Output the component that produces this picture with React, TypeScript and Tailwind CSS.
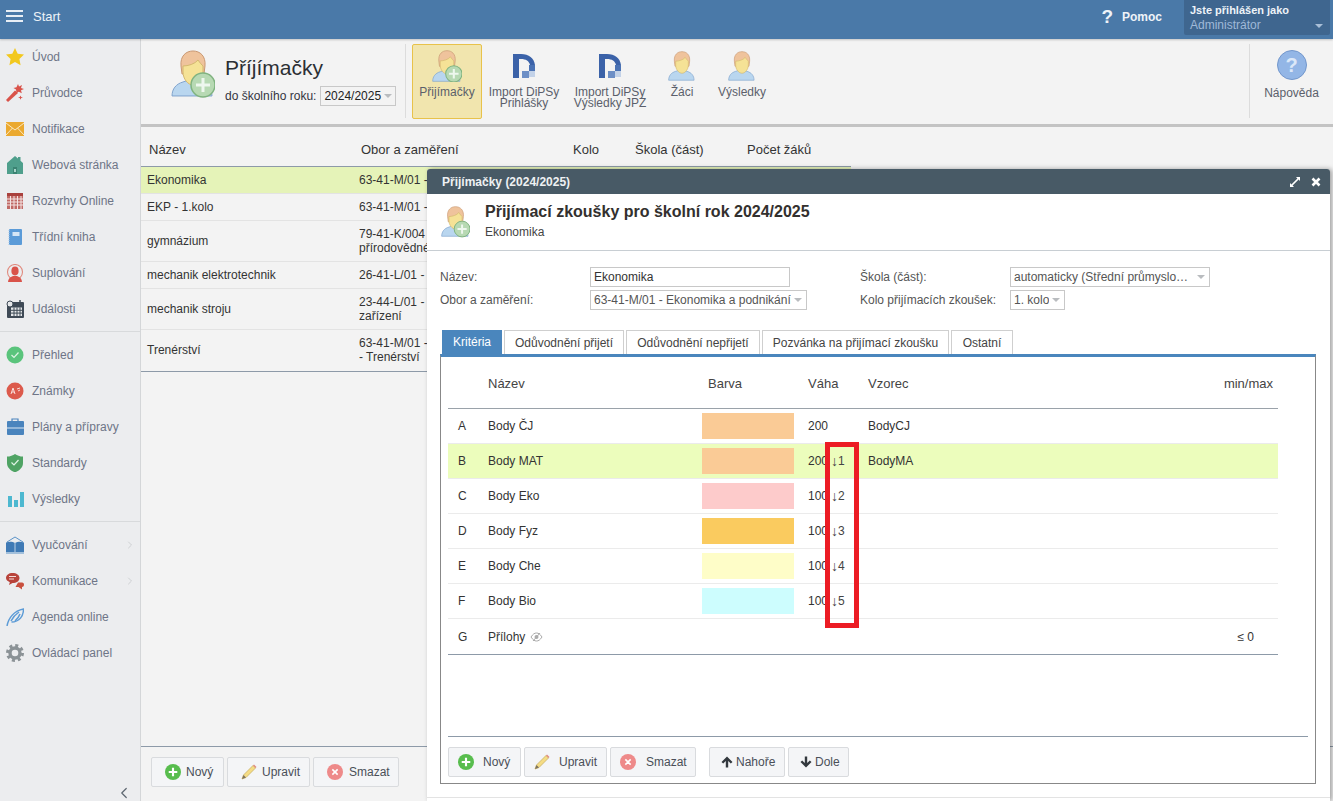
import { ChevronLeft, ChevronRight } from "lucide-react";
import type { ReactNode } from "react";

function Person({ size = 32, plus = false }: { size?: number; plus?: boolean }) {
  return (
    <svg width={size} height={size * 1.09} viewBox="0 0 44 48" className="shrink-0">
      <path d="M1 46c0-7 4-12 11-14l6-2h6l6 2c7 2 11 7 11 14z" fill="#b9d6ef" stroke="#7fa3cc" strokeWidth="1" />
      <path d="M10 16C9 6 15 1 22 1s13 5 12 15l-1 8H11z" fill="#efc39c" stroke="#c99871" strokeWidth="1" />
      <path d="M12 16c5 0 12-2 15-6 2 3 4 5 5 6v6c0 7-5 13-10 13S12 29 12 22z" fill="#f5e296" stroke="#d3b86e" strokeWidth="1" />
      {plus && (
        <g>
          <circle cx="32" cy="35" r="12" fill="#b7d9b3" stroke="#80b380" strokeWidth="1.5" />
          <path d="M32 28v14M25 35h14" stroke="#eef7ee" strokeWidth="3" />
        </g>
      )}
    </svg>
  );
}

function Dipsy() {
  return (
    <svg width="22" height="26" viewBox="0 0 22 26" className="shrink-0">
      <path d="M0 1h8c8 0 13 4 14 11h-5c-1-4-4-6-9-6H6v19H0z" fill="#3b62a8" />
      <rect x="16" y="12" width="6" height="6" fill="#4a72b4" />
      <rect x="9" y="18" width="7" height="7" fill="#6d8fc6" />
      <rect x="16" y="18" width="6" height="6" fill="#c3d2e8" />
    </svg>
  );
}

const sideIcons: Record<string, ReactNode> = {
  star: <path d="M9 0l2.700 5.800 6.300.8-4.600 4.300 1.200 6.300L9 14l-5.600 3.200 1.200-6.300L0 6.600l6.300-.8z" fill="#f2c81e" />,
  wand: (
    <g fill="#d9534a">
      <path d="M0 16L9 6.500l3 2.500L2 18z" />
      <path d="M12 0l1 2.500L16 1l-1 3 3 1-3 1.200 .8 3-3-1.500L10.500 9 10 5.500 7.500 4l3-.8z" />
      <path d="M14.500 11.500l.7 1.600 1.800.4-1.800.6-.7 1.700-.7-1.700-1.800-.6 1.800-.4z" />
    </g>
  ),
  mail: (
    <g>
      <rect x="0" y="2" width="18" height="14" fill="#eba92f" />
      <path d="M0 3l9 7 9-7M0 15l6.500-7M18 15l-6.500-7" stroke="#fbeed2" strokeWidth="0.9" fill="none" />
    </g>
  ),
  house: (
    <g>
      <path d="M9 0l3 2.600V1h2.500v3.800L17 7v11H1V7z" fill="#4f9f8c" />
      <rect x="7" y="11" width="4" height="7" fill="#3b8372" />
      <rect x="8" y="13" width="2" height="3" fill="#a8d3c8" />
    </g>
  ),
  grid: (
    <g>
      <rect x="1" y="1" width="16" height="16" fill="#c06a66" />
      <rect x="1" y="1" width="16" height="3" fill="#a9413d" />
      <path d="M1 7h16M1 10h16M1 13h16M4.500 4v13M8 4v13M11.500 4v13M15 4v13" stroke="#f4e4e3" strokeWidth="1" />
    </g>
  ),
  note: (
    <g>
      <rect x="3" y="1" width="13" height="16" rx="1" fill="#5b9bd8" />
      <path d="M3 2v15" stroke="#a8c9ea" strokeWidth="1" strokeDasharray="1 1" />
      <rect x="6.500" y="4" width="7" height="4" fill="#d5e6f6" />
    </g>
  ),
  sub: (
    <g>
      <circle cx="9" cy="8" r="7.500" fill="none" stroke="#e08a7e" strokeWidth="1.100" />
      <ellipse cx="9" cy="7" rx="3.600" ry="4.400" fill="#d9534a" />
      <path d="M2 18c0-3 2-5 5-6h4c3 1 5 3 5 6z" fill="#d9534a" />
    </g>
  ),
  cal: (
    <g>
      <rect x="1" y="2" width="17" height="16" rx="1" fill="#3f4a56" />
      <rect x="5" y="7.500" width="11" height="8.500" fill="#e6e8ea" />
      <path d="M5 10.300h11M5 13.100h11M8 7.500v8.500M11 7.500v8.500M14 7.500v8.500" stroke="#3f4a56" strokeWidth="1" />
      <circle cx="4" cy="4" r="3" fill="#e6e8ea" stroke="#3f4a56" />
      <path d="M14 0v3" stroke="#3f4a56" strokeWidth="1.500" />
    </g>
  ),
  ok: <circle cx="9" cy="9" r="8.500" fill="#5ac47c" />,
  grade: (
    <g>
      <circle cx="9" cy="9" r="8.500" fill="#dc5a4c" />
      <path d="M5 12l2-6 2 6M6 10h2M11 7l3-1M12 9l2-1" stroke="#f9e0dc" strokeWidth="1" fill="none" />
    </g>
  ),
  case: (
    <g>
      <path d="M6 3V1h6v2" fill="none" stroke="#4a84bd" strokeWidth="1.200" />
      <rect x="1" y="3" width="17" height="14" rx="1" fill="#4a84bd" />
      <path d="M1 10h17" stroke="#dce8f3" strokeWidth="1" />
    </g>
  ),
  shield: <path d="M9 0c2 1.500 5 2.600 8 2.600V9c0 4.500-3.500 7.600-8 9.400C4.500 16.600 1 13.500 1 9V2.600C4 2.600 7 1.500 9 0z" fill="#4fa364" />,
  bars: (
    <g fill="#4db8d0">
      <rect x="2" y="6" width="4" height="11" />
      <rect x="8" y="10" width="4" height="7" />
      <rect x="14" y="2" width="4" height="15" />
    </g>
  ),
  book: (
    <g>
      <path d="M1 6l8-5 8 5" fill="none" stroke="#5b93c8" strokeWidth="1" />
      <path d="M0 6.500c3-1 6.500-1 9 .5 2.500-1.500 6-1.500 9-.5V16H0z" fill="#3f7ab5" />
      <path d="M9 7v9" stroke="#dce8f3" strokeWidth="0.800" />
      <path d="M0 17h18" stroke="#5b93c8" strokeWidth="1" />
    </g>
  ),
  chat: (
    <g>
      <path d="M6.500 1c4 0 7 2 7 5s-3 5-7 5l-3.500 2 .8-2.800C1.500 9.200 0 7.800 0 6c0-3 3-5 6.500-5z" fill="#b8433a" />
      <path d="M3 4.500h7M3 7h5" stroke="#f4dcd9" strokeWidth="1" />
      <path d="M12 10.500h4c1.500 0 2 1 2 2.200s-.5 2.300-2 2.300v2.500l-3.500-2.500H9.500z" fill="#c9503f" />
    </g>
  ),
  feather: (
    <g fill="none" stroke="#5c9bd6" strokeWidth="1.500">
      <path d="M1 18C2.500 10 8 3 17.500 1c0 7-4 13-12 13" />
      <path d="M5 13c2-4 5-7 8-9M9 13c2-2 4-4 5-7" />
    </g>
  ),
  gear: (
    <g fill="none" stroke="#8b9296">
      <circle cx="9" cy="9" r="5" strokeWidth="3.400" />
      <circle cx="9" cy="9" r="7.500" strokeWidth="3" strokeDasharray="3 2.890" />
    </g>
  ),
};

const groups = [
  [
    ["star", "Úvod"],
    ["wand", "Průvodce"],
    ["mail", "Notifikace"],
    ["house", "Webová stránka"],
    ["grid", "Rozvrhy Online"],
    ["note", "Třídní kniha"],
    ["sub", "Suplování"],
    ["cal", "Události"],
  ],
  [
    ["ok", "Přehled"],
    ["grade", "Známky"],
    ["case", "Plány a přípravy"],
    ["shield", "Standardy"],
    ["bars", "Výsledky"],
  ],
  [
    ["book", "Vyučování", "more"],
    ["chat", "Komunikace", "more"],
    ["feather", "Agenda online"],
    ["gear", "Ovládací panel"],
  ],
];

function Sidebar() {
  return (
    <aside className="relative w-[141px] shrink-0 border-r border-[#d4d6d8] bg-[#ecedef]">
      {groups.map((items, g) => (
        <div key={g} className={g < 2 ? "mb-[5px] border-b border-[#d8dadc] pb-[4px]" : ""}>
          {items.map(([icon, label, more]) => (
            <div key={label} className="relative flex h-9 items-center pl-[6px] text-[12px] text-[#6e7587]">
              <svg width="18" height="18" viewBox="0 0 18 18" className="shrink-0">
                {sideIcons[icon]}
                {icon === "ok" && <path d="M5.500 9l2.500 2.500 4.500-5" fill="none" stroke="#dff5e5" strokeWidth="1.200" />}
                {icon === "shield" && <path d="M5.500 8.500l2.500 2.500 4.500-5" fill="none" stroke="#dff5e5" strokeWidth="1.200" />}
              </svg>
              <span className="ml-[8px]">{label}</span>
              {more && <ChevronRight size={12} strokeWidth={1.5} className="absolute left-[124px] text-[#c4c7ca]" />}
            </div>
          ))}
        </div>
      ))}
      <ChevronLeft size={18} strokeWidth={1.6} className="absolute bottom-[-1px] left-[115px] text-[#5d6670]" />
    </aside>
  );
}

function BtnIcon({ kind }: { kind: string }) {
  if (kind === "new")
    return (
      <svg width="16" height="16" viewBox="0 0 15 15" className="shrink-0">
        <circle cx="7.500" cy="7.500" r="7.500" fill="#58bd4e" />
        <path d="M7.500 3.500v8M3.500 7.500h8" stroke="#fff" strokeWidth="2" />
      </svg>
    );
  if (kind === "edit")
    return (
      <svg width="16" height="16" viewBox="0 0 16 16" className="shrink-0">
        <path d="M1 15l1.500-4L12 1.500 14.500 4 5 13.500z" fill="#f5dc84" stroke="#c9b063" strokeWidth="0.8" />
        <path d="M12 1.500L14.500 4l1-1-2.500-2.500z" fill="#e08a80" />
        <path d="M1 15l1.500-4L5 13.500z" fill="#7d7462" />
      </svg>
    );
  if (kind === "del")
    return (
      <svg width="16" height="16" viewBox="0 0 15 15" className="shrink-0">
        <circle cx="7.500" cy="7.500" r="7.500" fill="#ee8a8a" />
        <path d="M5 5l5 5M10 5l-5 5" stroke="#fff" strokeWidth="1.500" />
      </svg>
    );
  return (
    <svg width="12" height="12" viewBox="0 0 12 12" className={`shrink-0 ${kind === "down" ? "rotate-180" : ""}`}>
      <path d="M6 0.500L0.500 6l1.700 1.500L4.800 5v6.500h2.400V5l2.600 2.500L11.500 6z" fill="#33383e" />
    </svg>
  );
}

function Btn({ kind, label, w, pad }: { kind: string; label: string; w: string; pad: string }) {
  return (
    <div className={`flex h-[30px] items-center rounded-[2px] border border-[#d9dbde] bg-[#f4f5f7] text-[12px] text-[#4a4f57] ${w} ${pad}`}>
      <BtnIcon kind={kind} />
      <span>{label}</span>
    </div>
  );
}

function Caret({ color = "border-t-[#b9bcbf]" }: { color?: string }) {
  return <span className={`ml-auto h-0 w-0 shrink-0 border-x-[4px] border-t-[4px] border-x-transparent ${color}`} />;
}

function Select({ value, w }: { value: string; w: string }) {
  return (
    <div className={`flex h-5 items-center border border-[#c8c8c8] bg-white pr-[4px] pl-[3px] text-[12px] text-[#555] ${w}`}>
      <span className="truncate">{value}</span>
      <Caret />
    </div>
  );
}

function Tool({ icon, label, w, active }: { icon: ReactNode; label: ReactNode; w: string; active?: boolean }) {
  return (
    <div className={`flex h-[75px] flex-col items-center rounded-[2px] border pt-[4px] text-center text-[12px] leading-[11px] text-[#5b5f6b] ${w} ${active ? "border-[#e8c24a] bg-[#f1e5ae]" : "border-transparent"}`}>
      <div className="flex h-[34px] items-center justify-center">{icon}</div>
      <div className="mt-[4px] whitespace-nowrap">{label}</div>
    </div>
  );
}

function Toolbar() {
  return (
    <div className="flex h-[88px] shrink-0 border-b-[3px] border-[#c3c3c3] bg-[#f3f3f3] pt-[5px]">
      <div className="flex w-[264px] pt-[6px] pl-[30px]">
        <Person size={44} plus />
        <div className="ml-[10px]">
          <div className="mt-[6px] text-[21px] leading-[24px] text-[#2b2f33]">Příjímačky</div>
          <div className="mt-[6px] flex items-center text-[12px] text-[#33343f]">
            <span>do školního roku:</span>
            <div className="ml-[4px] flex h-5 w-[76px] items-center border border-[#c8c8c8] pr-[3px] pl-[3px] text-[#222]">
              2024/2025
              <Caret />
            </div>
          </div>
        </div>
      </div>
      <div className="h-[74px] w-px bg-[#dcdcdc]" />
      <div className="ml-[6px] flex">
        <Tool active w="w-[70px]" icon={<Person size={30} plus />} label="Přijímačky" />
        <Tool w="w-[84px]" icon={<Dipsy />} label={<>Import DiPSy<br />Prihlášky</>} />
        <Tool w="w-[88px]" icon={<Dipsy />} label={<>Import DiPSy<br />Výsledky JPZ</>} />
        <Tool w="w-[56px]" icon={<Person size={28} />} label="Žáci" />
        <Tool w="w-[64px]" icon={<Person size={28} />} label="Výsledky" />
      </div>
      <div className="ml-auto flex">
        <div className="h-[74px] w-px bg-[#dcdcdc]" />
        <div className="flex w-[83px] flex-col items-center pt-[6px] text-[12px] text-[#5b5f6b]">
          <div className="flex h-[30px] w-[30px] items-center justify-center rounded-full border border-[#7397cc] bg-[#93b6e6] text-[20px] leading-none font-bold text-[#dce8f8]">?</div>
          <div className="mt-[4px]">Nápověda</div>
        </div>
      </div>
    </div>
  );
}

const listRows = [
  { name: "Ekonomika", obor: ["63-41-M/01 -"], h: "h-[27px]", active: true },
  { name: "EKP - 1.kolo", obor: ["63-41-M/01 -"], h: "h-[27px]" },
  { name: "gymnázium", obor: ["79-41-K/004", "přírodovědné"], h: "h-[41px]" },
  { name: "mechanik elektrotechnik", obor: ["26-41-L/01 -"], h: "h-[27px]" },
  { name: "mechanik stroju", obor: ["23-44-L/01 -", "zařízení"], h: "h-[41px]" },
  { name: "Trenérství", obor: ["63-41-M/01 -", "- Trenérství"], h: "h-[41px]" },
];

function List() {
  return (
    <div className="flex min-h-0 flex-1 flex-col bg-[#f3f3f3]">
      <div className="flex h-[40px] w-[710px] shrink-0 items-end border-b border-[#8d9aa8] pb-[8px] pl-[8px] text-[13px] leading-[16px] text-[#333]">
        <span className="w-[212px]">Název</span>
        <span className="w-[212px]">Obor a zaměření</span>
        <span className="w-[62px]">Kolo</span>
        <span className="w-[112px]">Škola (část)</span>
        <span>Počet žáků</span>
      </div>
      <div className="w-[710px] border-b border-[#8d9aa8]">
        {listRows.map((r) => (
          <div key={r.name} className={`flex items-center border-b border-[#e3e3e3] pl-[6px] text-[12px] leading-[14px] text-[#333] last:border-b-0 last:pb-[2px] ${r.h} ${r.active ? "bg-[#e5f3b8]" : ""}`}>
            <span className="w-[212px]">{r.name}</span>
            <span className="w-[68px] overflow-hidden whitespace-nowrap">
              {r.obor.map((l) => (
                <div key={l}>{l}</div>
              ))}
            </span>
          </div>
        ))}
      </div>
      <div className="mt-auto flex h-[55px] shrink-0 gap-[3px] border-t border-[#8d9aa8] pt-[10px] pl-[10px]">
        <Btn kind="new" label="Nový" w="w-[73px]" pad="pl-[13px] gap-[5px]" />
        <Btn kind="edit" label="Upravit" w="w-[83px]" pad="pl-[13px] gap-[5px]" />
        <Btn kind="del" label="Smazat" w="w-[86px]" pad="pl-[13px] gap-[6px]" />
      </div>
    </div>
  );
}

const criteria = [
  { l: "A", n: "Body ČJ", c: "bg-[#facb96]", w: "200", f: "BodyCJ" },
  { l: "B", n: "Body MAT", c: "bg-[#facb96]", w: "200", f: "BodyMA", order: "1", active: true },
  { l: "C", n: "Body Eko", c: "bg-[#fdcbcb]", w: "100", order: "2" },
  { l: "D", n: "Body Fyz", c: "bg-[#facb5f]", w: "100", order: "3" },
  { l: "E", n: "Body Che", c: "bg-[#fefdc8]", w: "100", order: "4" },
  { l: "F", n: "Body Bio", c: "bg-[#cdfdfe]", w: "100", order: "5" },
];

function Criteria() {
  return (
    <div className="relative mx-[7px] w-[830px]">
      <div className="grid h-[52px] grid-cols-[40px_214px_106px_60px_1fr] items-center border-b border-[#9aa2aa] pt-[3px] text-[13px] text-[#444]">
        <span />
        <span>Název</span>
        <span className="pl-[6px]">Barva</span>
        <span>Váha</span>
        <span className="flex justify-between pr-[5px]">
          <span>Vzorec</span>
          <span>min/max</span>
        </span>
      </div>
      {criteria.map((r) => (
        <div key={r.l} className={`grid h-[35px] grid-cols-[40px_214px_106px_60px_1fr] items-center border-b border-[#ebebeb] text-[12px] text-[#333] ${r.active ? "bg-[#ecfdbc]" : ""}`}>
          <span className="pl-[10px]">{r.l}</span>
          <span>{r.n}</span>
          <span className={`h-[26px] w-[92px] ${r.c}`} />
          <span className="relative flex items-center">
            {r.w}
            {r.order && (
              <span className="absolute left-[23px] flex items-center text-[#444]">
                <span className="text-[14px] leading-none">↓</span>
                {r.order}
              </span>
            )}
          </span>
          <span>{r.f}</span>
        </div>
      ))}
      <div className="flex h-[36px] items-center justify-between border-b border-[#8d9aa8] text-[12px] text-[#333]">
        <span className="w-[40px] pl-[10px]">G</span>
        <span className="flex flex-1 items-center gap-[5px]">
          Přílohy
          <svg width="13" height="10" viewBox="0 0 13 10">
            <path d="M1 5c2-3 3.500-4 5.500-4S10 2 12 5c-2 3-3.500 4-5.500 4S3 8 1 5z" fill="none" stroke="#aaa" strokeWidth="1" />
            <circle cx="6.500" cy="5" r="2" fill="#aaa" />
            <path d="M3 9l7-8" stroke="#aaa" strokeWidth="1" />
          </svg>
        </span>
        <span className="pr-[24px]">≤ 0</span>
      </div>
      {/* red annotation around the order column */}
      <div className="absolute top-[85px] left-[377px] h-[186px] w-[34px] border-[5px] border-[#ec1c24]" />
    </div>
  );
}

const tabs = [
  ["Kritéria", "w-[60px]"],
  ["Odůvodnění přijetí", "w-[120px]"],
  ["Odůvodnění nepřijetí", "w-[134px]"],
  ["Pozvánka na přijímací zkoušku", "w-[187px]"],
  ["Ostatní", "w-[62px]"],
];

function Dialog() {
  return (
    <div className="absolute top-[169px] left-[427px] flex h-[632px] w-[903px] flex-col rounded-t-[3px] bg-white shadow-[2px_0_5px_rgba(0,0,0,0.35)]">
      <div className="flex h-[25px] shrink-0 items-center justify-between rounded-t-[3px] bg-[#485a66] pr-[9px] pl-[15px] text-[12px] font-bold text-[#eef1f3]">
        <span>Přijímačky (2024/2025)</span>
        <span className="flex items-center gap-[11px]">
          <svg width="10" height="10" viewBox="0 0 10 10">
            <path d="M6 0h4v4L8.600 2.600 2.600 8.600 4 10H0V6l1.400 1.400 6-6z" fill="#fff" />
          </svg>
          <svg width="10" height="10" viewBox="0 0 10 10">
            <path d="M1.500 1.500l7 7M8.500 1.500l-7 7" stroke="#fff" strokeWidth="2.600" />
          </svg>
        </span>
      </div>
      <div className="flex h-[57px] shrink-0 items-center border-b border-[#c8ced3] pl-[14px]">
        <Person size={29} plus />
        <div className="-mt-[2px] ml-[15px]">
          <div className="text-[16px] leading-[20px] font-bold text-[#33302e]">Přijímací zkoušky pro školní rok 2024/2025</div>
          <div className="mt-[2px] text-[12px] leading-[16px] text-[#444]">Ekonomika</div>
        </div>
      </div>
      <div className="grid shrink-0 grid-cols-[150px_270px_150px_1fr] items-center gap-y-[3px] pt-[16px] pl-[13px] text-[12px] text-[#555]">
        <span>Název:</span>
        <div className="flex h-5 w-[200px] items-center border border-[#c8c8c8] pl-[3px] text-[#333]">Ekonomika</div>
        <span>Škola (část):</span>
        <Select value="automaticky (Střední průmyslo…" w="w-[200px]" />
        <span>Obor a zaměření:</span>
        <Select value="63-41-M/01 - Ekonomika a podnikání" w="w-[217px]" />
        <span>Kolo přijímacích zkoušek:</span>
        <Select value="1. kolo" w="w-[55px]" />
      </div>
      <div className="mt-[20px] ml-[15px] flex h-[24px] shrink-0 gap-[2px] text-[12px]">
        {tabs.map(([t, w], i) => (
          <div key={t} className={`flex items-center justify-center border ${w} ${i === 0 ? "border-[#4a86bd] bg-[#4a86bd] text-white" : "border-[#cfcfcf] border-b-0 text-[#444]"}`}>
            {t}
          </div>
        ))}
      </div>
      <div className="ml-[13px] flex h-[430px] w-[876px] shrink-0 flex-col border border-t-[3px] border-[#888] border-t-[#4a86bd]">
        <Criteria />
        <div className="mx-[7px] mt-auto flex h-[47px] gap-[3px] border-t border-[#8d9aa8] pt-[10px]">
          <Btn kind="new" label="Nový" w="w-[73px]" pad="pl-[9px] gap-[9px]" />
          <Btn kind="edit" label="Upravit" w="w-[83px]" pad="pl-[9px] gap-[9px]" />
          <Btn kind="del" label="Smazat" w="w-[86px]" pad="pl-[9px] gap-[10px]" />
          <div className="w-[7px]" />
          <Btn kind="up" label="Nahoře" w="w-[76px]" pad="pl-[11px] gap-[3px]" />
          <Btn kind="down" label="Dole" w="w-[61px]" pad="pl-[11px] gap-[3px]" />
        </div>
      </div>
      <div className="mt-[13px] border-t border-[#e3e3e3]" />
    </div>
  );
}

export default function App() {
  return (
    <div className="relative flex h-[801px] w-[1333px] flex-col overflow-hidden bg-[#f3f3f3] font-['Liberation_Sans',Arial,sans-serif]">
      <header className="z-10 flex h-[39px] shrink-0 items-start bg-[#4a79a8] shadow-[0_1px_2px_rgba(0,0,0,0.2)]">
        <div className="mt-[10px] ml-[6px] flex h-[12px] w-[17px] flex-col justify-between">
          <span className="h-[2px] bg-[#e8eef5]" />
          <span className="h-[2px] bg-[#e8eef5]" />
          <span className="h-[2px] bg-[#e8eef5]" />
        </div>
        <span className="mt-[9px] ml-[10px] text-[13px] leading-[16px] text-[#eef3f8]">Start</span>
        <div className="mt-[8px] ml-auto flex items-center text-[#eef3f8]">
          <span className="text-[19px] leading-[18px] font-bold">?</span>
          <span className="ml-[9px] text-[12px] font-bold">Pomoc</span>
        </div>
        <div className="mr-[3px] ml-[22px] flex h-[35px] w-[146px] flex-col rounded-b-[2px] bg-[#3f668f] pt-[4px] pl-[6px]">
          <span className="text-[11px] leading-[13px] font-bold text-[#eef3f8]">Jste přihlášen jako</span>
          <span className="mt-[1px] flex items-center pr-[7px] text-[12px] leading-[15px] text-[#9fb9d8]">
            Administrátor
            <Caret color="border-t-[#a9bfd8]" />
          </span>
        </div>
      </header>
      <div className="flex min-h-0 flex-1">
        <Sidebar />
        <main className="flex min-w-0 flex-1 flex-col">
          <Toolbar />
          <List />
        </main>
      </div>
      <Dialog />
    </div>
  );
}
